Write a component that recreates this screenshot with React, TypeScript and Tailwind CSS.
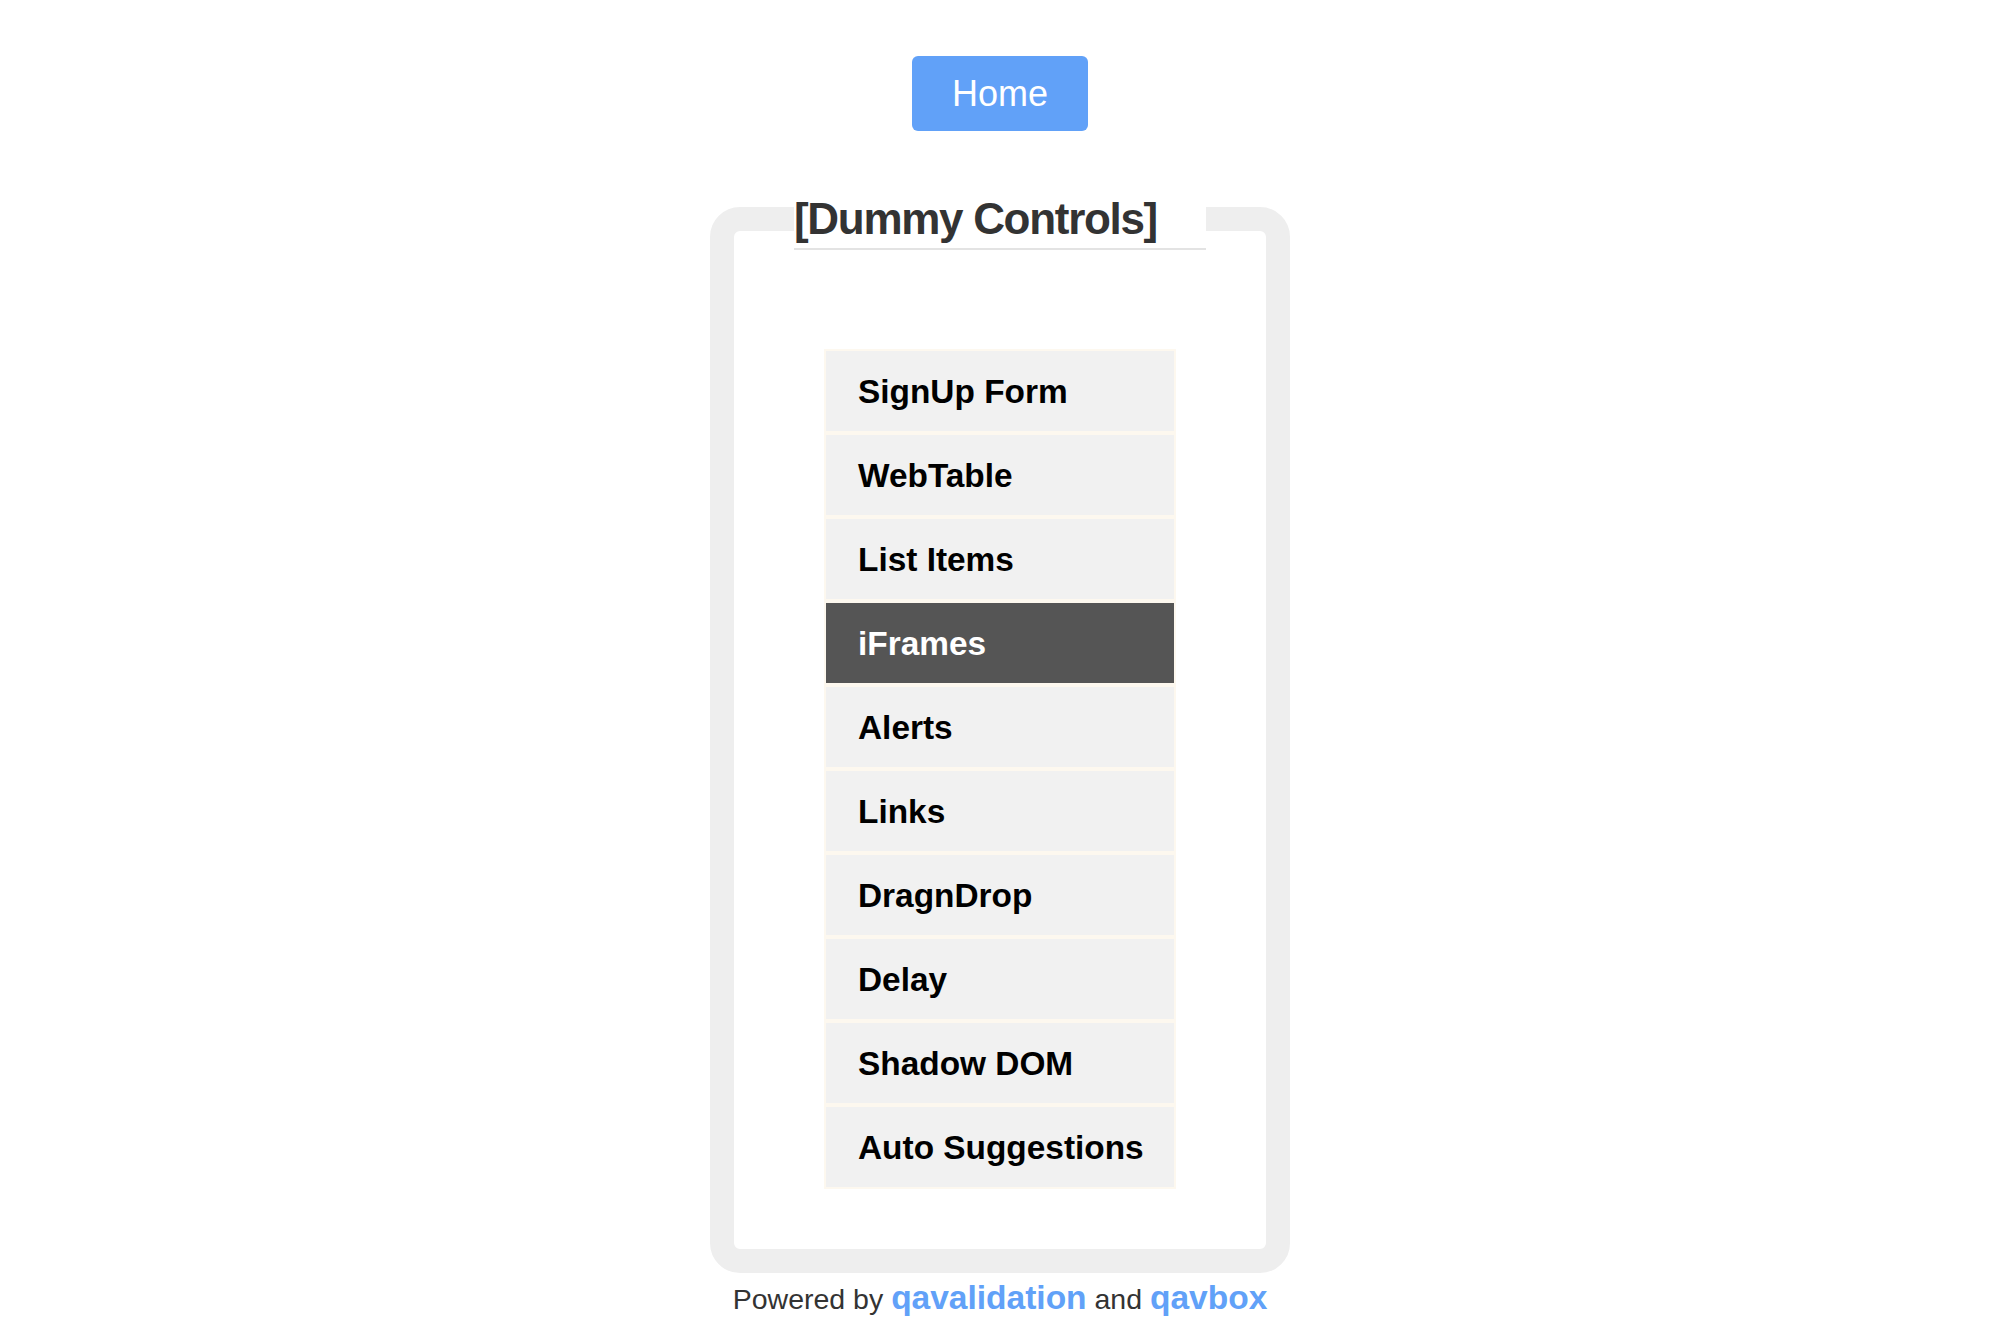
import React from "react";

const items = [
  "SignUp Form",
  "WebTable",
  "List Items",
  "iFrames",
  "Alerts",
  "Links",
  "DragnDrop",
  "Delay",
  "Shadow DOM",
  "Auto Suggestions",
];

export default function App() {
  return (
    <div
      className="min-h-screen bg-white flex flex-col items-center pt-[56px]"
      style={{ fontFamily: '"Liberation Sans", Arial, Helvetica, sans-serif' }}
    >
      <button className="w-[176px] h-[75px] rounded-[6px] bg-[#61a1f8] text-white text-[36px] leading-none flex items-center justify-center">
        Home
      </button>

      <fieldset className="mt-[56px] w-[580px] border-[24px] border-[#eeeeee] rounded-[30px] pb-[60px]">
        <legend className="ml-[60px] w-[412px] pt-[10px] pb-[7px] text-[44px] leading-none font-bold text-[#333333] tracking-[-1.3px] border-b-2 border-[#e3e3e3]">
          [Dummy Controls]
        </legend>
        <ul className="mt-[99px] mx-auto w-[352px] flex flex-col">
          {items.map((it) => {
            const active = it === "iFrames";
            return (
              <li
                key={it}
                className={
                  active
                    ? "h-[84px] border-2 border-[#fdf8ef] bg-[#555555] text-white flex items-center pl-[32px] pt-[2px] text-[33.4px] font-bold"
                    : "h-[84px] border-2 border-[#fdf8ef] bg-[#f1f1f1] text-black flex items-center pl-[32px] pt-[2px] text-[33.4px] font-bold"
                }
              >
                {it}
              </li>
            );
          })}
        </ul>
      </fieldset>

      <div className="mt-[6px] text-[28.5px] leading-[38px] text-[#333333] text-center">
        Powered by{" "}
        <a className="text-[33.5px] leading-[38px] font-bold text-[#61a1f8]">qavalidation</a>{" "}
        and{" "}
        <a className="text-[33.5px] leading-[38px] font-bold text-[#61a1f8]">qavbox</a>
      </div>
    </div>
  );
}
